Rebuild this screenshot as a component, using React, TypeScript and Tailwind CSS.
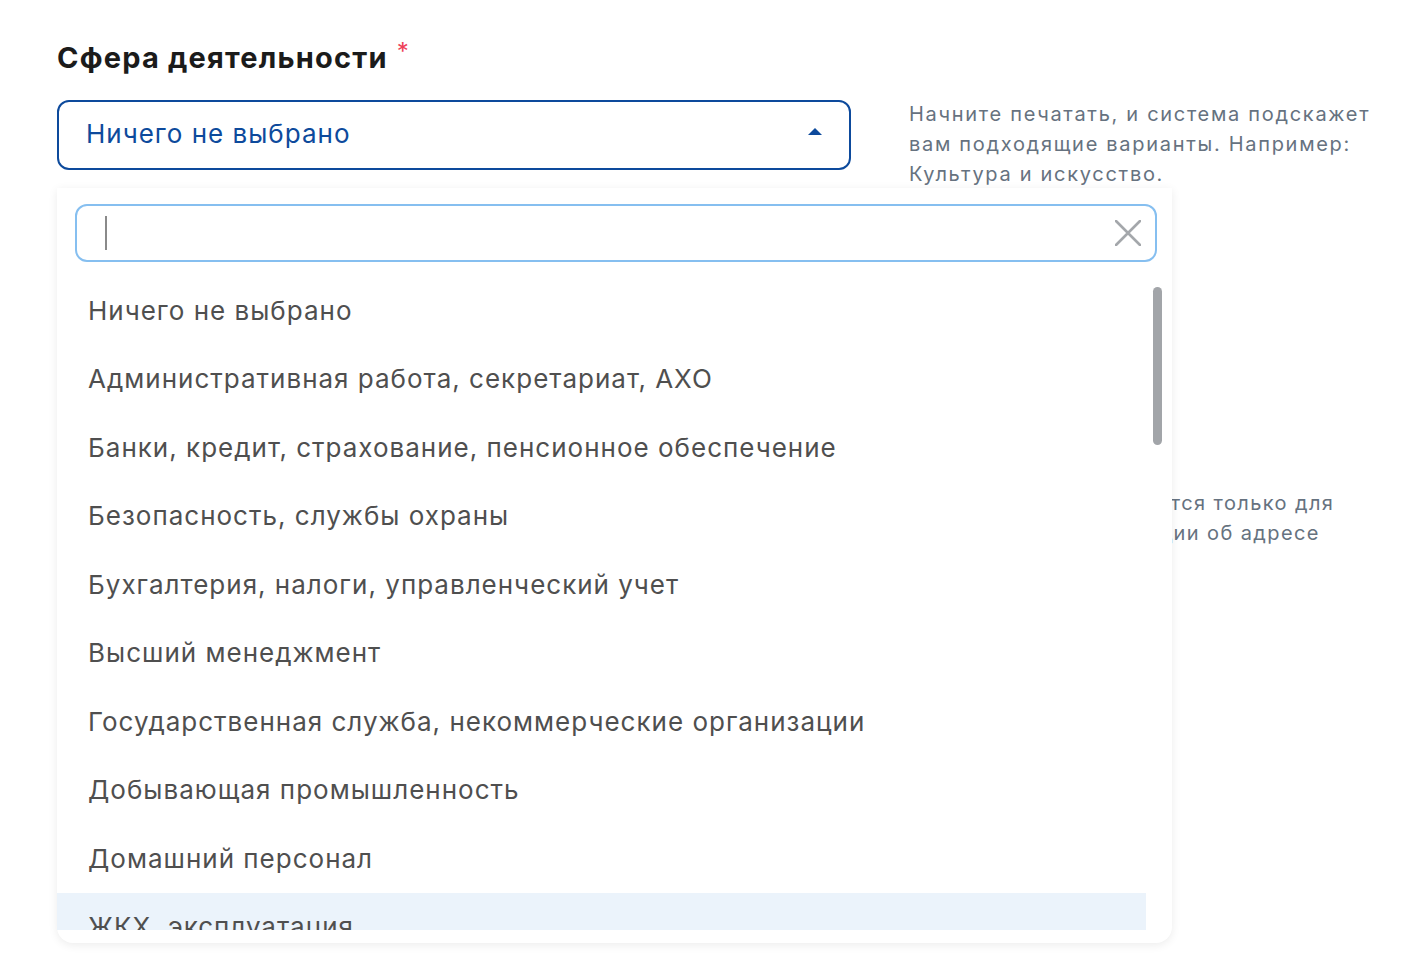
const options = [
  'Ничего не выбрано',
  'Административная работа, секретариат, АХО',
  'Банки, кредит, страхование, пенсионное обеспечение',
  'Безопасность, службы охраны',
  'Бухгалтерия, налоги, управленческий учет',
  'Высший менеджмент',
  'Государственная служба, некоммерческие организации',
  'Добывающая промышленность',
  'Домашний персонал',
  'ЖКХ, эксплуатация',
];

export default function App() {
  return (
    <div
      className="min-h-[968px] w-[1413px] bg-white"
      style={{ fontFamily: 'Inter, "Noto Sans", sans-serif' }}
    >
      <div className="flex pl-[57px] pt-[38px]">
        <div className="relative w-[794px]">
          <div className="flex items-start gap-[9px]">
            <span className="text-[29px] font-bold leading-[40px] tracking-[1.2px] text-[#1b1b1b]">
              Сфера деятельности
            </span>
            <span className="text-[24px] leading-[28px] text-[#ee3f58]">*</span>
          </div>

          <div className="mt-[22px] flex h-[70px] items-center justify-between rounded-[12px] border-2 border-[#0d4a9c] pb-[3px] pl-[27px] pr-[26px]">
            <span className="text-[26px] tracking-[1px] text-[#0d4a9c]">Ничего не выбрано</span>
            <svg width="16" height="10" viewBox="0 0 16 10" className="mb-[4px]">
              <path d="M8 1 L15 8 L1 8 Z" fill="#0d4a9c" />
            </svg>
          </div>

          {/* выпадающий список */}
          <div className="absolute left-0 top-[150px] z-10 w-[1115px] rounded-b-[16px] bg-white shadow-[0_2px_10px_rgba(0,0,0,0.08)]">
            <div className="pl-[18px] pr-[15px] pt-[16px]">
              <div className="flex h-[58px] items-center justify-between rounded-[12px] border-2 border-[#86bff0] pl-[28px] pr-[14px]">
                <span className="h-[34px] w-[2px] bg-[#8a8a8a]" />
                <svg width="26" height="26" viewBox="0 0 26 26">
                  <path d="M1 1 L25 25 M25 1 L1 25" stroke="#a4a7ab" strokeWidth="2.6" strokeLinecap="round" />
                </svg>
              </div>
            </div>
            <div className="relative mt-[14px] h-[654px] overflow-hidden pr-[26px]">
              {options.map((o, i) => (
                <div
                  key={o}
                  className={`flex h-[68.5px] items-center pl-[31px] text-[26px] tracking-[1px] text-[#4f4f4f] ${
                    i === options.length - 1 ? 'bg-[#ebf3fb]' : ''
                  }`}
                >
                  {o}
                </div>
              ))}
              <div className="absolute right-[10px] top-[11px] h-[158px] w-[9px] rounded-full bg-[#a2a5a9]" />
            </div>
            <div className="h-[13px]" />
          </div>
        </div>

        <div className="ml-[58px] w-[480px] pt-[61px] text-[20px] leading-[30px] tracking-[1.7px] text-[#66727f]">
          <p>
            Начните печатать, и система подскажет
            <br />
            вам подходящие варианты. Например:
            <br />
            Культура и искусство.
          </p>
          <p className="mt-[299px] whitespace-nowrap tracking-[1.4px]">
            Информация используется только для
            <br />
            отображения информации об адресе
          </p>
        </div>
      </div>
    </div>
  );
}
